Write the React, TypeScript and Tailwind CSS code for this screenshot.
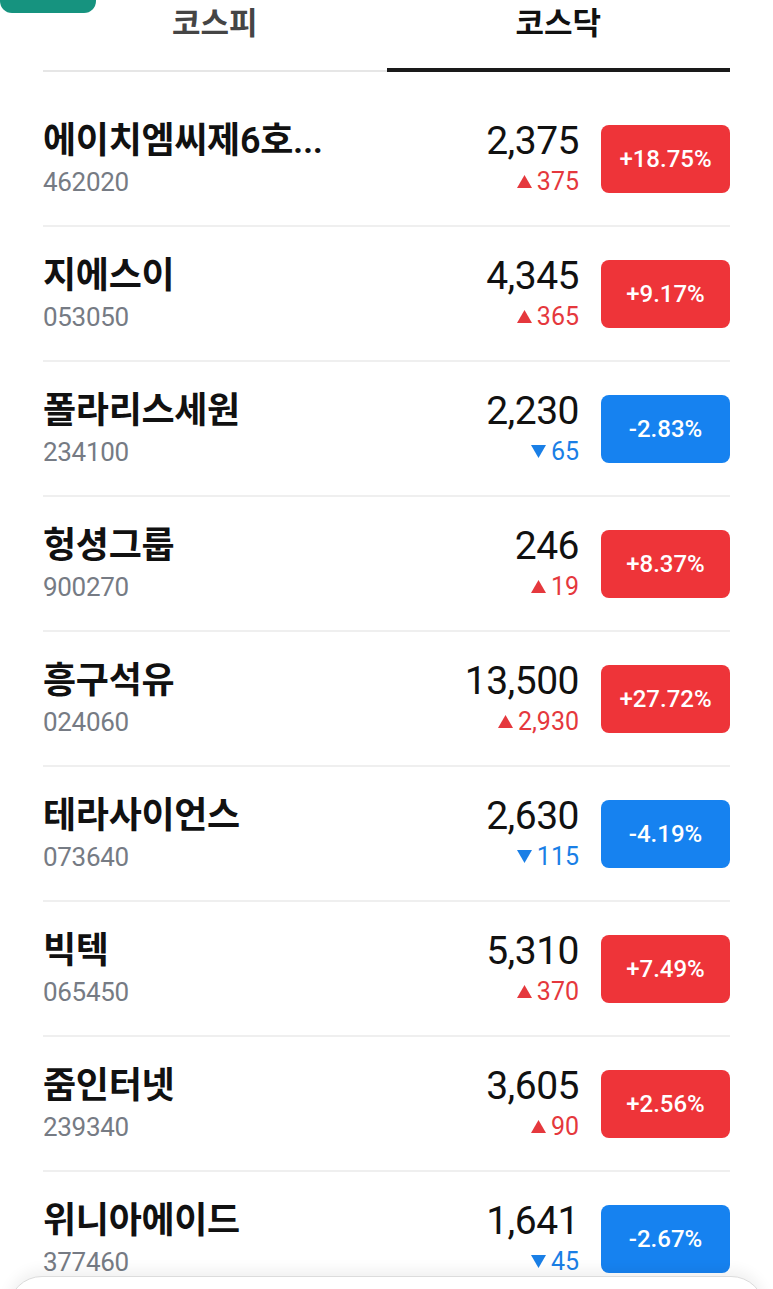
import React from "react";

type Stock = {
  name: string;
  code: string;
  price: string;
  diff: string;
  rate: string;
  up: boolean;
};

const stocks: Stock[] = [
  { name: "에이치엠씨제6호...", code: "462020", price: "2,375", diff: "375", rate: "+18.75%", up: true },
  { name: "지에스이", code: "053050", price: "4,345", diff: "365", rate: "+9.17%", up: true },
  { name: "폴라리스세원", code: "234100", price: "2,230", diff: "65", rate: "-2.83%", up: false },
  { name: "헝셩그룹", code: "900270", price: "246", diff: "19", rate: "+8.37%", up: true },
  { name: "흥구석유", code: "024060", price: "13,500", diff: "2,930", rate: "+27.72%", up: true },
  { name: "테라사이언스", code: "073640", price: "2,630", diff: "115", rate: "-4.19%", up: false },
  { name: "빅텍", code: "065450", price: "5,310", diff: "370", rate: "+7.49%", up: true },
  { name: "줌인터넷", code: "239340", price: "3,605", diff: "90", rate: "+2.56%", up: true },
  { name: "위니아에이드", code: "377460", price: "1,641", diff: "45", rate: "-2.67%", up: false },
];

function Arrow({ up }: { up: boolean }) {
  return (
    <svg width="15" height="13" viewBox="0 0 15 13" className="mr-[5px]">
      {up ? (
        <polygon points="7.5,0 15,13 0,13" fill="#e5383d" />
      ) : (
        <polygon points="0,0 15,0 7.5,13" fill="#1a7fe6" />
      )}
    </svg>
  );
}

function StockRow({ s }: { s: Stock }) {
  return (
    <div className="h-[135px] flex items-center border-b-2 border-[#efefef]">
      <div className="flex-1 min-w-0 flex flex-col">
        <div className="text-[36px] leading-[40px] font-semibold text-[#111] tracking-[-0.3px] whitespace-nowrap">
          {s.name}
        </div>
        <div className="mt-[6px] text-[26px] leading-[30px] text-[#767b84] tracking-[-0.3px]">{s.code}</div>
      </div>
      <div className="flex flex-col items-end">
        <div className="text-[39px] leading-[40px] text-[#111] tracking-[-0.5px]">{s.price}</div>
        <div
          className={`mt-[6px] flex items-center text-[25px] leading-[30px] ${
            s.up ? "text-[#e5383d]" : "text-[#1a7fe6]"
          }`}
        >
          <Arrow up={s.up} />
          {s.diff}
        </div>
      </div>
      <div
        className={`ml-[22px] w-[129px] h-[68px] rounded-[8px] flex items-center justify-center text-white text-[24px] font-medium ${
          s.up ? "bg-[#ee3439]" : "bg-[#1682f0]"
        }`}
      >
        {s.rate}
      </div>
    </div>
  );
}

export default function App() {
  return (
    <div className="relative w-[773px] h-[1289px] overflow-hidden bg-white font-['Roboto','Noto_Sans_CJK_KR',sans-serif]">
      <div className="absolute left-0 top-0 w-[96px] h-[13px] rounded-b-[12px] bg-[#16937f]" />

      <div className="px-[43px] flex">
        <div className="flex-1 h-[72px] flex flex-col justify-between items-center">
          <div className="pt-[4px] text-[31px] leading-[40px] font-semibold text-[#454545]">코스피</div>
          <div className="w-full h-[2px] bg-[#e6e6e6]" />
        </div>
        <div className="flex-1 h-[72px] flex flex-col justify-between items-center">
          <div className="pt-[4px] text-[31px] leading-[40px] font-bold text-[#111]">코스닥</div>
          <div className="w-full h-[4px] bg-[#1a1a1a]" />
        </div>
      </div>

      <div className="px-[43px] pt-[20px]">
        {stocks.map((s) => (
          <StockRow key={s.code} s={s} />
        ))}
      </div>

      <div className="absolute left-[8px] right-[8px] top-[1276px] h-[60px] rounded-t-[34px] bg-white border border-[#dcdcdc] shadow-[0_-6px_14px_rgba(0,0,0,0.06)]" />
    </div>
  );
}
